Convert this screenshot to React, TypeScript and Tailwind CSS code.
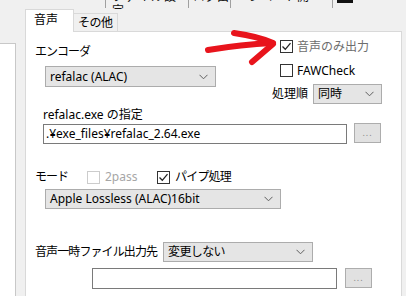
import React from 'react';

const font = { fontFamily: '"Noto Sans", "Noto Sans CJK JP", sans-serif' };

function Chevron() {
  return (
    <svg width="9" height="6" viewBox="0 0 9 6" className="shrink-0">
      <path d="M0.5 0.8 L4.5 4.8 L8.5 0.8" fill="none" stroke="#606060" strokeWidth="1" />
    </svg>
  );
}

function Combo({ text, className }: { text: string; className: string }) {
  return (
    <div
      className={`flex items-center justify-between bg-[#e5e5e5] border border-[#acacac] pl-[4px] pr-[7px] text-[12px] leading-none text-black ${className}`}
    >
      <span>{text}</span>
      <Chevron />
    </div>
  );
}

function Check({ checked, disabled }: { checked?: boolean; disabled?: boolean }) {
  return (
    <div
      className={`w-[13px] h-[13px] shrink-0 bg-white border flex items-center justify-center ${
        disabled ? 'border-[#cccccc]' : 'border-[#333333]'
      }`}
    >
      {checked && (
        <svg width="11" height="11" viewBox="0 0 11 11">
          <path d="M1.5 5.5 L4.3 8.3 L9.5 2.2" fill="none" stroke="#222" strokeWidth="1.3" />
        </svg>
      )}
    </div>
  );
}

function DotsButton({ className }: { className: string }) {
  return (
    <div
      className={`w-[27px] h-[20px] bg-[#e1e1e1] border border-[#adadad] flex items-center justify-center text-[9px] text-[#8a8a8a] tracking-[1px] ${className}`}
    >
      ...
    </div>
  );
}

export default function App() {
  return (
    <div className="relative w-[406px] h-[296px] overflow-hidden bg-[#f0f0f0] text-black" style={font}>
      {/* toolbar row above, scrolled mostly out of view */}
      <div className="h-[9px] overflow-hidden flex items-start text-[12px] text-[#111]">
        <div className="w-[105px]" />
        <div className="w-px h-[8px] bg-[#a0a0a0]" />
        <div className="w-[82px] -mt-[10px] h-[14px] leading-[14px] pl-[6px] tracking-[1px]">ファイル設定</div>
        <div className="w-px h-[8px] bg-[#a0a0a0]" />
        <div className="w-[41px] -mt-[10px] h-[14px] leading-[14px] pl-[4px]">ログ出</div>
        <div className="w-px h-[8px] bg-[#a0a0a0]" />
        <div className="w-[101px] -mt-[10px] h-[14px] leading-[14px] pl-[6px]">エンコード開</div>
        <div className="w-px h-[8px] bg-[#a0a0a0]" />
        <div className="ml-[4px] w-[16px] h-[3px] bg-[#111]" />
        <div className="-mt-[10px] h-[14px] leading-[14px] pl-[10px] tracking-[8px]">・一</div>
      </div>

      <div className="flex">
        {/* left list box edge */}
        <div className="mt-[34px] w-[16px] h-[260px] bg-white border-t border-r border-[#c8c8c8]" />

        {/* tab control */}
        <div className="ml-[9px] w-[377px]">
          <div className="flex items-end h-[22px]">
            <div className="relative z-10 w-[49px] h-[23px] -mb-px bg-white border border-b-0 border-[#d9d9d9] pl-[8px] pt-[2px] text-[12px] leading-[16px]">
              音声
            </div>
            <div className="w-[44px] h-[18px] bg-[#f0f0f0] border border-l-0 border-b-0 border-[#d9d9d9] pl-[4px] text-[12px] leading-[17px] tracking-[-0.5px]">
              その他
            </div>
          </div>

          <div className="h-[280px] bg-white border border-[#d9d9d9] text-[12px]">
            {/* encoder / options */}
            <div className="flex items-start">
              <div className="pl-[9px]">
                <div className="mt-[12px] h-[16px] leading-[16px] tracking-[-1px]">エンコーダ</div>
                <Combo text="refalac (ALAC)" className="mt-[6px] ml-[10px] w-[171px] h-[21px]" />
              </div>
              <div className="ml-[56px]">
                <div className="mt-[8px] pl-[8px] flex items-center h-[13px]">
                  <Check checked />
                  <span className="ml-[4px] text-[#6d6d6d] leading-none">音声のみ出力</span>
                </div>
                <div className="mt-[11px] pl-[8px] flex items-center h-[13px]">
                  <Check />
                  <span className="ml-[4px] leading-none">FAWCheck</span>
                </div>
                <div className="mt-[7px] flex items-center h-[20px]">
                  <span className="w-[41px] leading-none">処理順</span>
                  <Combo text="同時" className="w-[69px] h-[20px]" />
                </div>
              </div>
            </div>

            {/* exe path */}
            <div className="mt-[3px] pl-[17px] h-[16px] leading-[16px]">refalac.exe の指定</div>
            <div className="flex items-start pl-[17px]">
              <div className="mt-[1px] w-[304px] h-[20px] bg-white border border-[#7a7a7a] pl-[2px] leading-[18px]">
                .¥exe_files¥refalac_2.64.exe
              </div>
              <DotsButton className="ml-[7px]" />
            </div>

            {/* mode */}
            <div className="mt-[25px] pl-[9px] flex items-center h-[16px]">
              <span className="w-[52px] leading-none tracking-[-1px]">モード</span>
              <div className="w-[70px] flex items-center">
                <Check disabled />
                <span className="ml-[5px] text-[#a6a6a6] leading-none">2pass</span>
              </div>
              <div className="flex items-center">
                <Check checked />
                <span className="ml-[5px] leading-none tracking-[-0.8px]">パイプ処理</span>
              </div>
            </div>
            <Combo text="Apple Lossless (ALAC)16bit" className="mt-[4px] ml-[19px] w-[236px] h-[20px]" />

            {/* temp output */}
            <div className="mt-[33px] pl-[9px] flex items-center h-[20px]">
              <span className="w-[128px] leading-none tracking-[-0.9px]">音声一時ファイル出力先</span>
              <Combo text="変更しない" className="w-[150px] h-[20px] tracking-[-0.6px]" />
            </div>
            <div className="mt-[6px] ml-[66px] flex items-start">
              <div className="w-[245px] h-[21px] bg-white border border-[#7a7a7a]" />
              <DotsButton className="ml-[8px]" />
            </div>
          </div>
        </div>
      </div>

      {/* hand-drawn red arrow annotation */}
      <svg
        className="absolute left-0 top-0 pointer-events-none"
        width="406"
        height="296"
        viewBox="0 0 406 296"
      >
        <g fill="none" stroke="#e8141c" strokeWidth="6" strokeLinecap="round" strokeLinejoin="round">
          <path d="M208 50 C 226 47, 250 44, 272 43" />
          <path d="M234 33 C 248 35, 262 38, 273 43" />
          <path d="M273 44 C 266 50, 259 56, 252 62" />
        </g>
      </svg>
    </div>
  );
}
